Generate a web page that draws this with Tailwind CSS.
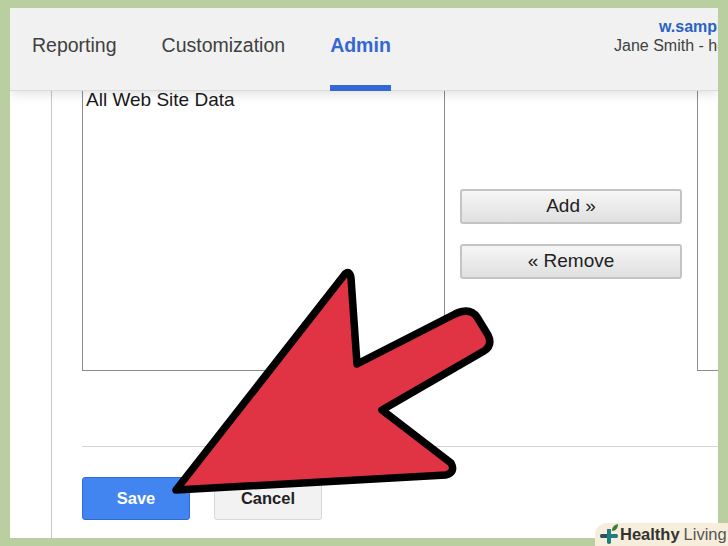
<!DOCTYPE html>
<html lang="en">
<head>
    <meta charset="UTF-8">
    <meta name="viewport" content="width=device-width, initial-scale=1.0">
    <title>Admin</title>
    <script src="https://cdn.jsdelivr.net/npm/@tailwindcss/browser@4"></script>
</head>
<body class="relative w-[728px] h-[546px] overflow-hidden bg-[#b9cfa0] font-['Liberation_Sans',Arial,sans-serif]">
    <div class="relative mx-[10px] mt-[8px] w-[708px] h-[530px] bg-white overflow-hidden flex flex-col">
        <!-- top nav -->
        <header class="relative z-10 h-[83px] shrink-0 bg-[#f1f1f1] border-b border-[#dcdcdc] shadow-[0_3px_10px_rgba(0,0,0,0.12)] flex justify-between">
            <nav class="flex pl-[22px] gap-[45px] text-[19.5px] text-[#404040]">
                <a class="pt-[24px] leading-[26px]">Reporting</a>
                <a class="pt-[24px] leading-[26px]">Customization</a>
                <a class="h-[83px] pt-[24px] leading-[26px] w-[61px] font-bold text-[#3367d6] border-b-[6px] border-[#3367d6]">Admin</a>
            </nav>
            <div class="w-[104px] overflow-hidden whitespace-nowrap pt-[9px] leading-[19px] text-[16px]">
                <div class="pl-[45px] font-bold text-[#2a62c4]">w.sample.com</div>
                <div class="text-[#404040]">Jane Smith - help</div>
            </div>
        </header>

        <main class="flex-1 ml-[41px] border-l border-[#c8c8c8] pl-[30px]">
            <div class="flex h-[280px]">
                <div class="w-[363px] shrink-0 border-x border-b border-[#8c8c8c] pl-[3px] text-[19px] leading-[18px] text-[#1a1a1a]">All Web Site Data</div>
                <div class="w-[222px] mx-[15px] shrink-0 flex flex-col gap-[20px] pt-[98px]">
                    <button class="h-[35px] rounded-[3px] border-2 border-[#c4c4c4] bg-gradient-to-b from-[#f6f6f6] to-[#e0e0e0] text-[19px] text-[#222]">Add »</button>
                    <button class="h-[35px] rounded-[3px] border-2 border-[#c4c4c4] bg-gradient-to-b from-[#f6f6f6] to-[#e0e0e0] text-[19px] text-[#222]">« Remove</button>
                </div>
                <div class="flex-1 border-l border-b border-[#8c8c8c]"></div>
            </div>
            <div class="mt-[75px] h-px bg-[#d4d4d4]"></div>
            <div class="mt-[30px] flex gap-[24px]">
                <button class="w-[108px] h-[43px] rounded-[3px] border border-[#2f6bd8] bg-[#4285f0] text-[16.5px] font-bold text-white">Save</button>
                <button class="w-[108px] h-[43px] rounded-[3px] border border-[#d8d8d8] bg-[#f2f2f2] text-[16.5px] font-bold text-[#222]">Cancel</button>
            </div>
        </main>
    </div>

    <!-- red arrow callout -->
    <svg class="absolute left-0 top-0 z-20" width="728" height="546" viewBox="0 0 728 546">
        <path d="M176 490 L345 274 Q350 270 351 278 L357 364 L455 314 Q470 307 477 317 L488 335 Q493 345 484 351 L382 410 L451 463 Q456 472 446 475 Z" fill="#e03344" stroke="#000" stroke-width="7.5" stroke-linejoin="round"/>
    </svg>

    <!-- watermark -->
    <div class="absolute right-0 bottom-0 z-30 w-[133px] h-[23px] rounded-tl-[12px] bg-[#f6eeda] flex items-center pl-[4px] text-[16.5px] leading-none text-[#333]">
        <svg class="shrink-0" width="20" height="22" viewBox="0 0 20 22">
            <path d="M8 10 V5 H12 V10 Z M12 10 H18 Q20 12 18 14 H12 V19 Q10 21 8 19 V10 Z" fill="#1f7f80"/>
            <path d="M8 10 V14 H2 Q0 12 2 10 Z" fill="#2f4f5a"/>
            <path d="M13 7 C13 3 15 1 19 0 C19 4 17 7 13 7 Z" fill="#3f7d35"/>
        </svg>
        <span class="ml-[1px] font-bold">Healthy</span><span class="ml-[4px] text-[#555]">Living</span>
    </div>
</body>
</html>
